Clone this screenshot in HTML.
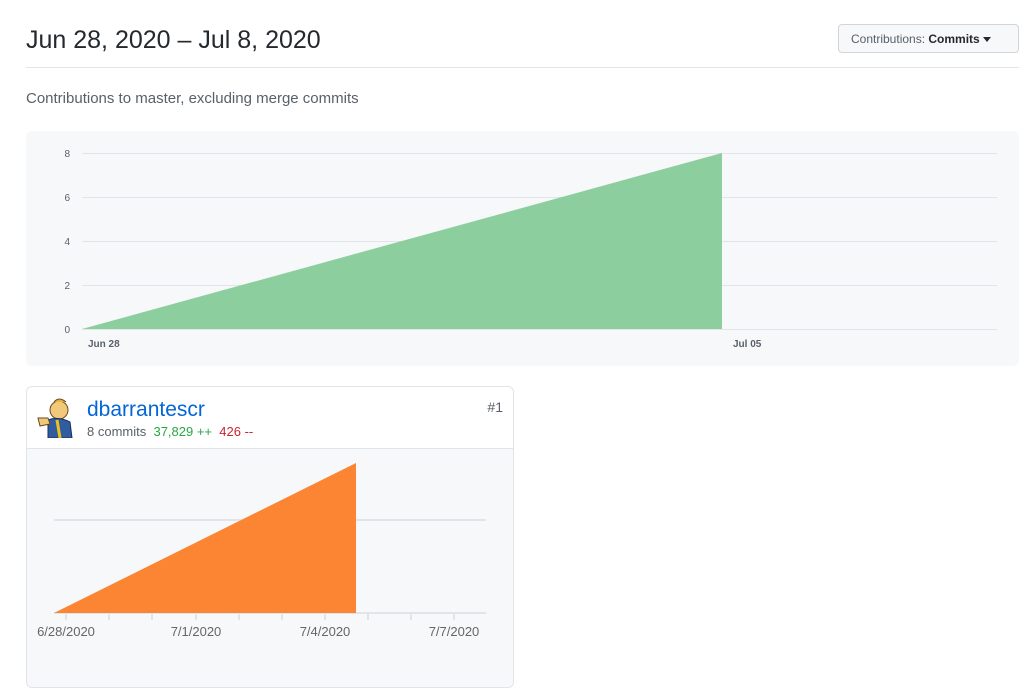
<!DOCTYPE html>
<html><head><style>
body{margin:0;background:#fff;font-family:"Liberation Sans",Arial,sans-serif;color:#24292e;width:1035px;height:677px;overflow:hidden;position:relative}
.a{position:absolute}
</style></head><body>
<div class="a" style="left:26px;top:25px;font-size:25px;line-height:30px;color:#24292e">Jun 28, 2020 – Jul 8, 2020</div>
<div class="a" style="left:838px;top:24px;width:181px;height:29px;border:1px solid #d1d5da;border-radius:4px;background:#f6f8fa;font-size:12px;line-height:28px;box-sizing:border-box;padding-left:12px;color:#586069">Contributions: <b style="color:#24292e">Commits</b> <span style="display:inline-block;border-left:4px solid transparent;border-right:4px solid transparent;border-top:5px solid #24292e;vertical-align:middle;margin-left:0px"></span></div>
<div class="a" style="left:26px;top:67px;width:993px;height:1px;background:#e1e4e8"></div>
<div class="a" style="left:26px;top:90px;font-size:15px;color:#586069">Contributions to master, excluding merge commits</div>
<div class="a" style="left:26px;top:131px;width:993px;height:235px;background:#f6f8fa;border-radius:6px"></div>
<svg class="a" style="left:0;top:0" width="1035" height="677">
<g stroke="#e1e4e8" stroke-width="1">
<line x1="82" y1="153.5" x2="997" y2="153.5"/><line x1="82" y1="197.5" x2="997" y2="197.5"/><line x1="82" y1="241.5" x2="997" y2="241.5"/><line x1="82" y1="285.5" x2="997" y2="285.5"/><line x1="82" y1="329.5" x2="997" y2="329.5"/>
</g>
<polygon points="82,329 722,153 722,329" fill="#8cce9e"/>
<g font-size="10" fill="#586069" text-anchor="end" font-family="Liberation Sans,Arial,sans-serif">
<text x="70" y="157">8</text><text x="70" y="201">6</text><text x="70" y="245">4</text><text x="70" y="289">2</text><text x="70" y="333">0</text>
</g>
<g font-size="10" fill="#586069" font-weight="bold" font-family="Liberation Sans,Arial,sans-serif">
<text x="88" y="347">Jun 28</text><text x="733" y="347">Jul 05</text>
</g>
</svg>
<div class="a" style="left:26px;top:386px;width:486px;height:300px;border:1px solid #e1e4e8;border-radius:6px;background:#f6f8fa;overflow:hidden">
<div style="height:61px;background:#fff;border-bottom:1px solid #e1e4e8;position:relative">
<svg class="a" style="left:9px;top:9px" width="42" height="42" viewBox="0 0 42 42">
<circle cx="23" cy="14" r="9" fill="#f2c97a" stroke="#6a4a1a"/>
<path d="M18 6 Q23 0 30 6" fill="#e4b040" stroke="#6a4a1a"/>
<path d="M12 24 Q22 20 34 26 L36 42 L12 42 Z" fill="#2f5da0" stroke="#1a2f5a"/>
<path d="M21 24 L24 42" stroke="#f0c020" stroke-width="3"/>
<path d="M2 22 L12 22 L14 28 L4 30 Z" fill="#f2c97a" stroke="#6a4a1a"/>
</svg>
<div class="a" style="left:60px;top:11px;font-size:21px;color:#0366d6">dbarrantescr</div>
<div class="a" style="left:60px;top:37px;font-size:13px;color:#586069">8 commits &nbsp;<span style="color:#28a745">37,829 ++</span> &nbsp;<span style="color:#cb2431">426 --</span></div>
<div class="a" style="right:10px;top:12px;font-size:14px;color:#586069">#1</div>
</div>
</div>
<svg class="a" style="left:0;top:0" width="1035" height="677">
<line x1="54" y1="520" x2="486" y2="520" stroke="#e1e4e8" stroke-width="2"/>
<line x1="54" y1="613" x2="486" y2="613" stroke="#e1e4e8" stroke-width="2"/>
<polygon points="54,613 356,463 356,613" fill="#fb8532"/>
<g stroke="#e1e4e8" stroke-width="2">
<line x1="66" y1="613" x2="66" y2="620"/><line x1="109" y1="613" x2="109" y2="620"/><line x1="152" y1="613" x2="152" y2="620"/><line x1="196" y1="613" x2="196" y2="620"/><line x1="239" y1="613" x2="239" y2="620"/><line x1="282" y1="613" x2="282" y2="620"/><line x1="325" y1="613" x2="325" y2="620"/><line x1="368" y1="613" x2="368" y2="620"/><line x1="411" y1="613" x2="411" y2="620"/><line x1="454" y1="613" x2="454" y2="620"/>
</g>
<g font-size="13" fill="#666" text-anchor="middle" font-family="Liberation Sans,Arial,sans-serif">
<text x="66" y="636">6/28/2020</text><text x="196" y="636">7/1/2020</text><text x="325" y="636">7/4/2020</text><text x="454" y="636">7/7/2020</text>
</g>
</svg>
</body></html>
